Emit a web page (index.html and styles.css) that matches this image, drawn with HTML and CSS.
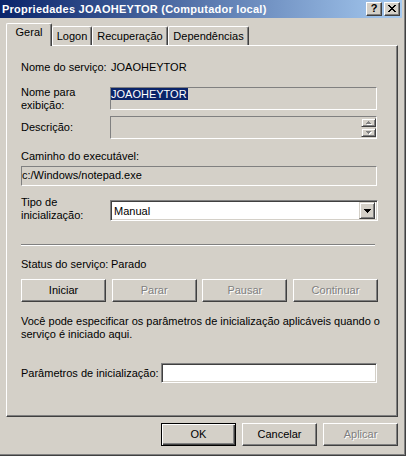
FILE: index.html
```html
<!DOCTYPE html>
<html lang="pt-BR">
<head>
<meta charset="utf-8">
<title>Propriedades JOAOHEYTOR</title>
<link rel="stylesheet" href="styles.css">
</head>
<body>
<div class="window">
  <div class="titlebar">
    <span class="title">Propriedades JOAOHEYTOR (Computador local)</span>
    <div class="caption-buttons">
      <span class="cbtn cbtn-help">?</span>
      <span class="cbtn cbtn-close">
        <svg width="8" height="7" viewBox="0 0 8 7" shape-rendering="crispEdges">
          <path d="M0 0h2v1h1v1h2V1h1V0h2v1H7v1H6v1H5v1h1v1h1v1h1v1H6V6H5V5H3v1H2v1H0V6h1V5h1V4h1V3H2V2H1V1H0z" fill="#000"/>
        </svg>
      </span>
    </div>
  </div>
  <div class="body">
    <div class="tabs">
      <div class="tab tab-active tab-w46">Geral</div>
      <div class="tab tab-w40">Logon</div>
      <div class="tab tab-w76">Recuperação</div>
      <div class="tab tab-w81">Dependências</div>
    </div>
    <div class="panel">
      <div class="row row-service">
        <span class="label">Nome do serviço:</span>
        <span class="value">JOAOHEYTOR</span>
      </div>
      <div class="row row-display">
        <span class="label label-2">Nome para<br>exibição:</span>
        <div class="field static wide"><span class="selected">JOAOHEYTOR</span></div>
      </div>
      <div class="row row-desc">
        <span class="label">Descrição:</span>
        <div class="field static wide field-desc">
          <div class="spin">
            <span class="spin-btn"><svg width="5" height="3" viewBox="0 0 5 3" shape-rendering="crispEdges"><path d="M2 0h1v1h1v1h1v1H0V2h1V1h1z" fill="#808080"/></svg></span>
            <span class="spin-btn"><svg width="5" height="3" viewBox="0 0 5 3" shape-rendering="crispEdges"><path d="M0 0h5v1H4v1H3v1H2V2H1V1H0z" fill="#808080"/></svg></span>
          </div>
        </div>
      </div>
      <div class="row row-path-label">
        <span>Caminho do executável:</span>
      </div>
      <div class="row row-path">
        <div class="field static full">c:/Windows/notepad.exe</div>
      </div>
      <div class="row row-type">
        <span class="label label-2">Tipo de<br>inicialização:</span>
        <div class="combo">
          <span class="combo-text">Manual</span>
          <span class="combo-btn"><svg width="7" height="4" viewBox="0 0 7 4" shape-rendering="crispEdges"><path d="M0 0h7v1H6v1H5v1H4v1H3V3H2V2H1V1H0z" fill="#000"/></svg></span>
        </div>
      </div>
      <div class="separator"></div>
      <div class="row row-status">
        <span class="label">Status do serviço:</span>
        <span class="value">Parado</span>
      </div>
      <div class="row row-actions">
        <button class="btn btn-action">Iniciar</button>
        <button class="btn btn-action disabled">Parar</button>
        <button class="btn btn-action disabled">Pausar</button>
        <button class="btn btn-action disabled">Continuar</button>
      </div>
      <p class="info">Você pode especificar os parâmetros de inicialização aplicáveis quando o<br>serviço é iniciado aqui.</p>
      <div class="row row-params">
        <span class="label label-params">Parâmetros de inicialização:</span>
        <div class="field sunken params"></div>
      </div>
    </div>
    <div class="dialog-buttons">
      <button class="btn btn-dialog default"><span>OK</span></button>
      <button class="btn btn-dialog">Cancelar</button>
      <button class="btn btn-dialog disabled">Aplicar</button>
    </div>
  </div>
</div>
</body>
</html>
```

FILE: styles.css
```css
* { box-sizing: border-box; }

body {
  margin: 0;
  background: #D4D0C8;
  font-family: "Liberation Sans", Arial, sans-serif;
  font-size: 11px;
  line-height: 13px;
  color: #000;
}

.window {
  width: 406px;
  height: 456px;
  background: #D4D0C8;
  padding: 0 4px 4px 0;
  box-shadow: inset -1px -1px 0 #404040, inset -2px -2px 0 #808080;
  display: flex;
  flex-direction: column;
}

.titlebar {
  height: 18px;
  flex: none;
  background: linear-gradient(to right, #0A246A, #A6CAF0);
  display: flex;
  align-items: center;
  justify-content: space-between;
  padding: 0 2px 0 2px;
}

.title {
  color: #fff;
  font-weight: bold;
  letter-spacing: 0.25px;
  white-space: nowrap;
}

.caption-buttons {
  display: flex;
  gap: 2px;
}

.cbtn {
  width: 16px;
  height: 14px;
  background: #D4D0C8;
  border-top: 1px solid #fff;
  border-left: 1px solid #fff;
  border-right: 1px solid #404040;
  border-bottom: 1px solid #404040;
  box-shadow: inset -1px -1px 0 #808080;
  display: flex;
  align-items: center;
  justify-content: center;
  font-weight: bold;
  font-size: 11px;
  line-height: 11px;
}

.cbtn-help { padding-bottom: 1px; }
.cbtn-close { padding-bottom: 1px; }

.body {
  flex: 1;
  display: flex;
  flex-direction: column;
  padding: 5px 4px 0 6px;
}

.tabs {
  display: flex;
  align-items: flex-end;
  height: 22px;
  position: relative;
  z-index: 1;
}

.tab {
  height: 19px;
  background: #D4D0C8;
  border-top: 1px solid #fff;
  border-left: 1px solid #fff;
  border-right: 1px solid #404040;
  border-radius: 2px 2px 0 0;
  box-shadow: inset -1px 0 0 #808080;
  padding-top: 3px;
  text-align: center;
  white-space: nowrap;
}

.tab-active {
  height: 23px;
  margin-bottom: -1px;
  padding-top: 2px;
}

.tab-w46 { width: 46px; }
.tab-w40 { width: 40px; }
.tab-w76 { width: 76px; }
.tab-w81 { width: 81px; }

.panel {
  flex: none;
  height: 372px;
  border-top: 1px solid #fff;
  border-left: 1px solid #fff;
  border-right: 1px solid #404040;
  border-bottom: 1px solid #404040;
  box-shadow: inset -1px -1px 0 #808080;
  padding: 0 19px 0 14px;
}

.row {
  display: flex;
}

.label {
  width: 89px;
  flex: none;
}

.row-service { margin-top: 15px; height: 13px; }
.row-display { margin-top: 13px; height: 23px; }
.row-display .label { margin-top: -1px; }
.row-desc { margin-top: 6px; height: 23px; align-items: center; }
.row-path-label { margin-top: 11px; height: 13px; }
.row-path { margin-top: 3px; height: 20px; }
.row-type { margin-top: 10px; height: 26px; }
.row-status { margin-top: 12px; height: 13px; }
.row-actions { margin-top: 8px; height: 23px; justify-content: space-between; }
.row-params { margin-top: 22px; height: 20px; align-items: center; }

.value { margin-left: 1px; }

.field {
  background: #D4D0C8;
  height: 100%;
}

.field.static {
  border-top: 1px solid #808080;
  border-left: 1px solid #808080;
  border-right: 1px solid #fff;
  border-bottom: 1px solid #fff;
}

.field.wide { width: 267px; }
.field.full { width: 356px; padding-top: 2px; }

.field.sunken {
  background: #fff;
  border-top: 1px solid #808080;
  border-left: 1px solid #808080;
  border-right: 1px solid #fff;
  border-bottom: 1px solid #fff;
  box-shadow: inset 1px 1px 0 #404040, inset -1px -1px 0 #D4D0C8;
}

.label-params { width: 140px; }
.field.params { width: 216px; }

.selected {
  display: inline-block;
  background: #0A246A;
  color: #fff;
  line-height: 12px;
  height: 12px;
  padding-right: 1px;
}

.field-desc {
  display: flex;
  justify-content: flex-end;
  padding: 1px 0 1px 0;
}

.spin {
  display: flex;
  flex-direction: column;
  gap: 1px;
  width: 15px;
}

.spin-btn {
  height: 10px;
  background: #D4D0C8;
  border-top: 1px solid #D4D0C8;
  border-left: 1px solid #D4D0C8;
  border-right: 1px solid #404040;
  border-bottom: 1px solid #404040;
  box-shadow: inset 1px 1px 0 #fff, inset -1px -1px 0 #808080;
  display: flex;
  align-items: center;
  justify-content: center;
}

.spin-btn svg { filter: drop-shadow(1px 1px 0 #fff); }

.combo {
  margin-top: 4px;
  width: 268px;
  height: 21px;
  background: #fff;
  border-top: 1px solid #808080;
  border-left: 1px solid #808080;
  border-right: 1px solid #fff;
  border-bottom: 1px solid #fff;
  box-shadow: inset 1px 1px 0 #404040, inset -1px -1px 0 #D4D0C8;
  padding: 2px 2px 2px 3px;
  display: flex;
  align-items: center;
  justify-content: space-between;
}

.combo-text { padding-top: 1px; }

.combo-btn {
  width: 16px;
  height: 17px;
  background: #D4D0C8;
  border-top: 1px solid #D4D0C8;
  border-left: 1px solid #D4D0C8;
  border-right: 1px solid #404040;
  border-bottom: 1px solid #404040;
  box-shadow: inset 1px 1px 0 #fff, inset -1px -1px 0 #808080;
  display: flex;
  align-items: center;
  justify-content: center;
}

.separator {
  margin-top: 22px;
  width: 354px;
  height: 2px;
  border-top: 1px solid #808080;
  border-bottom: 1px solid #fff;
}

.btn {
  font: inherit;
  color: #000;
  background: #D4D0C8;
  height: 23px;
  padding: 0;
  border-top: 1px solid #fff;
  border-left: 1px solid #fff;
  border-right: 1px solid #404040;
  border-bottom: 1px solid #404040;
  box-shadow: inset -1px -1px 0 #808080;
  border-radius: 0;
  text-align: center;
}

.btn.disabled {
  color: #808080;
  text-shadow: 1px 1px 0 #fff;
}

.btn-action { width: 85px; }

.info {
  margin: 13px -20px 0 0;
  line-height: 13px;
  white-space: nowrap;
}

.dialog-buttons {
  margin-top: 6px;
  display: flex;
  justify-content: flex-end;
  gap: 6px;
}

.btn-dialog { width: 75px; }

.btn.default {
  border: 1px solid #000;
  box-shadow: inset 1px 1px 0 #fff, inset -1px -1px 0 #404040, inset -2px -2px 0 #808080;
}
```
